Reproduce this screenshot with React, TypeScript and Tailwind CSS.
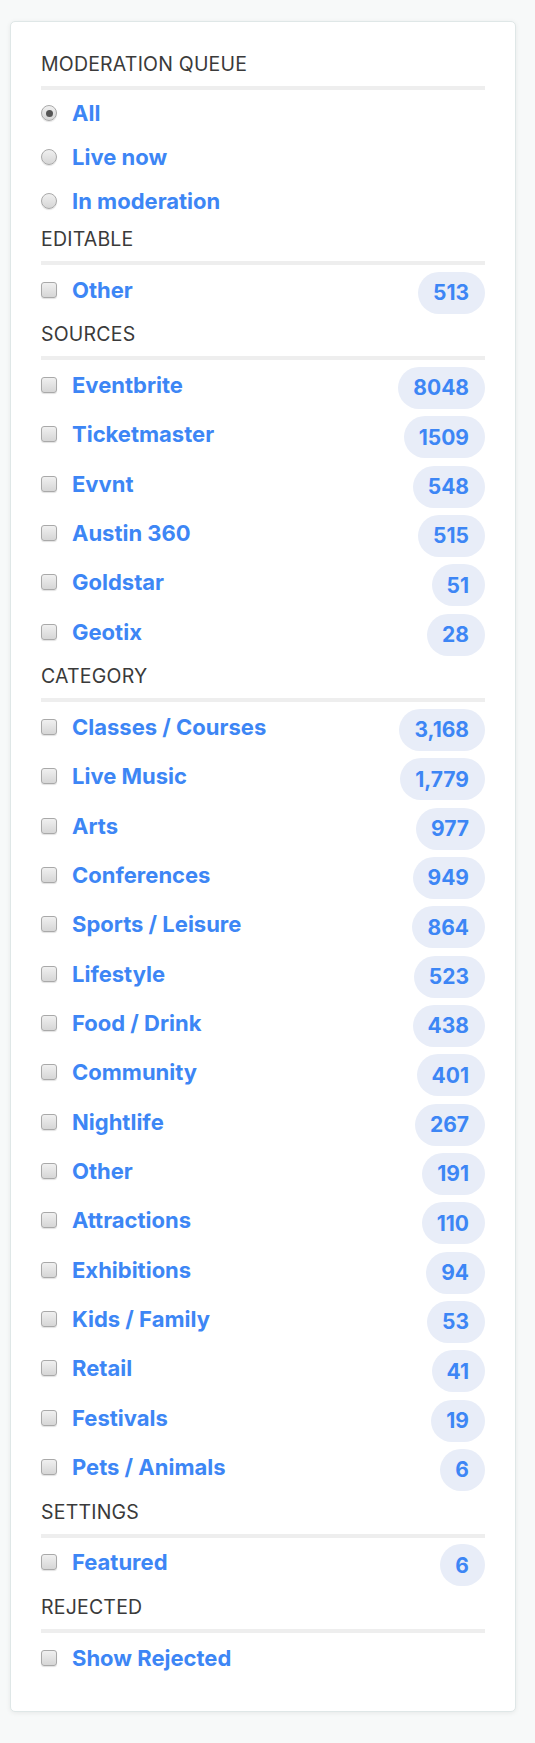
const sources = [
  { name: 'Eventbrite', count: '8048' },
  { name: 'Ticketmaster', count: '1509' },
  { name: 'Evvnt', count: '548' },
  { name: 'Austin 360', count: '515' },
  { name: 'Goldstar', count: '51' },
  { name: 'Geotix', count: '28' },
];

const categories = [
  { name: 'Classes / Courses', count: '3,168' },
  { name: 'Live Music', count: '1,779' },
  { name: 'Arts', count: '977' },
  { name: 'Conferences', count: '949' },
  { name: 'Sports / Leisure', count: '864' },
  { name: 'Lifestyle', count: '523' },
  { name: 'Food / Drink', count: '438' },
  { name: 'Community', count: '401' },
  { name: 'Nightlife', count: '267' },
  { name: 'Other', count: '191' },
  { name: 'Attractions', count: '110' },
  { name: 'Exhibitions', count: '94' },
  { name: 'Kids / Family', count: '53' },
  { name: 'Retail', count: '41' },
  { name: 'Festivals', count: '19' },
  { name: 'Pets / Animals', count: '6' },
];

function Heading({ title, first }: { title: string; first?: boolean }) {
  return (
    <div className={first ? '' : 'mt-[8px]'}>
      <h3 className="text-[19.5px] leading-[24px] font-normal tracking-[0.2px] text-[#3a3a3a] uppercase">{title}</h3>
      <div className="mt-[10px] h-[4px] bg-[#eeeeee]" />
    </div>
  );
}

function Checkbox() {
  return (
    <span className="block w-[16px] h-[16px] shrink-0 rounded-[3px] border border-[#a9a9a9] bg-gradient-to-b from-[#f0f0f0] to-[#d6d6d6] shadow-[0_1px_1px_rgba(0,0,0,0.12)]" />
  );
}

function Radio({ checked }: { checked?: boolean }) {
  return (
    <span className="flex items-center justify-center w-[16px] h-[16px] shrink-0 rounded-full border border-[#a9a9a9] bg-gradient-to-b from-[#f0f0f0] to-[#d6d6d6] shadow-[0_1px_1px_rgba(0,0,0,0.12)]">
      {checked && <span className="block w-[7px] h-[7px] rounded-full bg-[#555555]" />}
    </span>
  );
}

function CheckRow({ name, count }: { name: string; count?: string }) {
  return (
    <li className="flex items-center h-[49.33px]">
      <Checkbox />
      <span className="ml-[15px] text-[22px] font-bold text-[#3d86f5] leading-none">{name}</span>
      {count && (
        <span className="ml-auto mt-[6px] h-[42px] flex items-center pl-[15px] pr-[16px] rounded-[21px] bg-[#e8edf8] text-[21px] font-bold text-[#3d86f5] leading-none">
          {count}
        </span>
      )}
    </li>
  );
}

export default function App() {
  const queue = ['All', 'Live now', 'In moderation'];
  return (
    <div className="min-h-[1743px] bg-[#f7f9f9] pt-[21px] pl-[10px] font-['Inter',sans-serif]">
      <div className="w-[506px] bg-white border border-[#dfe7e7] rounded-[5px] shadow-[0_1px_5px_rgba(0,0,0,0.07)] px-[30px] pt-[30px] pb-[29px]">
        <Heading title="Moderation Queue" first />
        <ul className="mt-[1px]">
          {queue.map((q, i) => (
            <li key={q} className="flex items-center h-[44px]">
              <Radio checked={i === 0} />
              <span className="ml-[15px] text-[22px] font-bold text-[#3d86f5] leading-none">{q}</span>
            </li>
          ))}
        </ul>
        <div className="mt-[4px]">
          <Heading title="Editable" first />
        </div>
        <ul>
          <CheckRow name="Other" count="513" />
        </ul>
        <Heading title="Sources" />
        <ul>
          {sources.map((s) => (
            <CheckRow key={s.name} name={s.name} count={s.count} />
          ))}
        </ul>
        <Heading title="Category" />
        <ul>
          {categories.map((c) => (
            <CheckRow key={c.name} name={c.name} count={c.count} />
          ))}
        </ul>
        <Heading title="Settings" />
        <ul>
          <CheckRow name="Featured" count="6" />
        </ul>
        <Heading title="Rejected" />
        <ul>
          <CheckRow name="Show Rejected" />
        </ul>
      </div>
    </div>
  );
}
